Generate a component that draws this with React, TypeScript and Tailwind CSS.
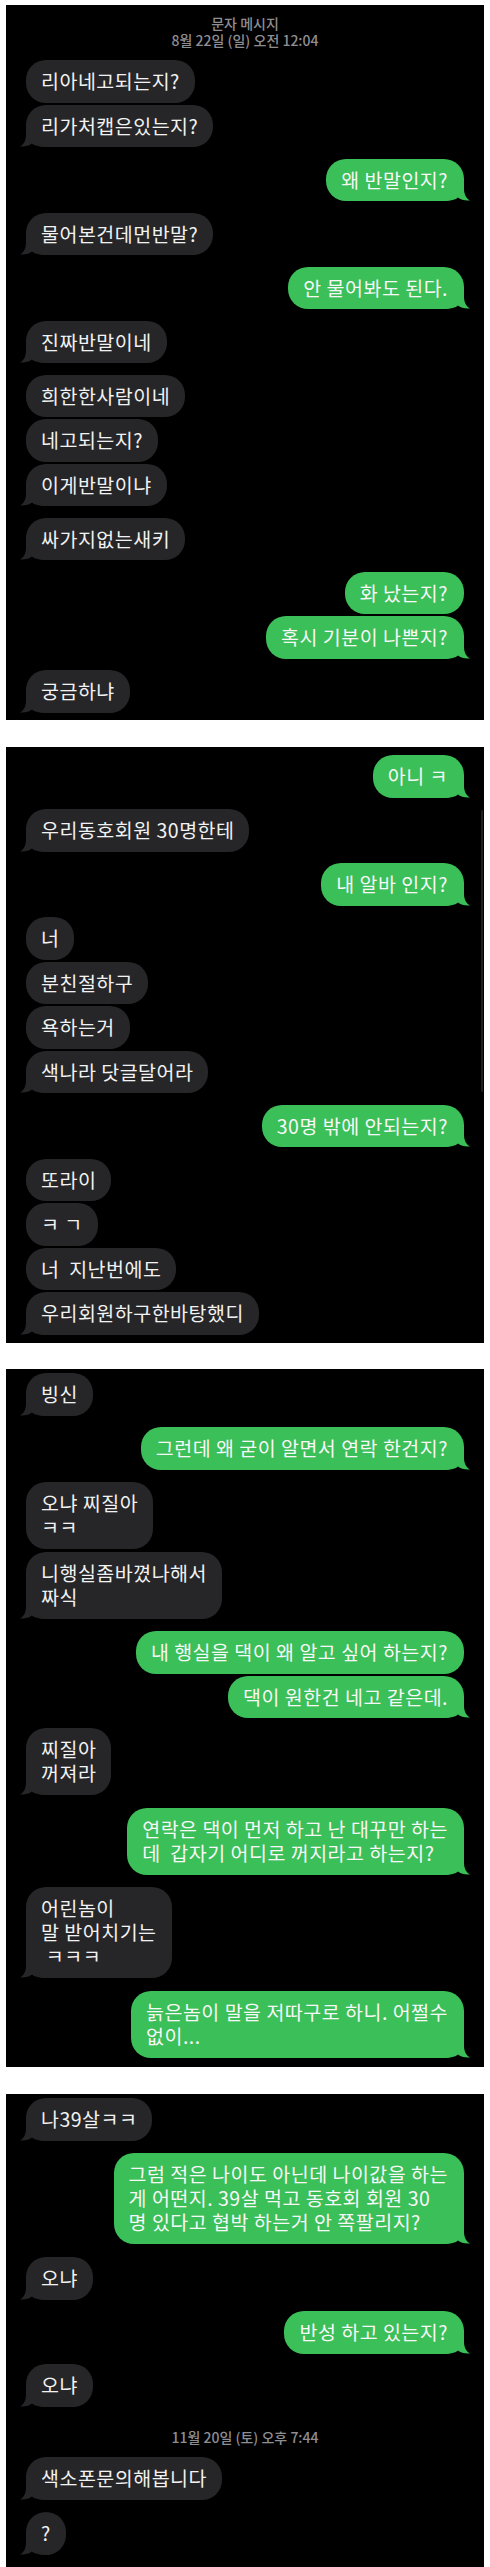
import React from "react";

type Msg = { s: "L" | "R"; t: string; tail?: boolean; mt: string };

const G = "mt-[11.5px]";
const I = "mt-[2px]";

function TailL({ color }: { color: string }) {
  return (
    <svg className="absolute bottom-0 left-[-6px]" width="30" height="20" viewBox="0 0 30 20">
      <path d="M6 0 L6 8 C6 14 3 18 0 19.5 C5 20 9.5 18.5 12 16.5 C14.5 18.5 18 20 30 20 L30 0 Z" fill={color} />
    </svg>
  );
}

function TailR({ color }: { color: string }) {
  return (
    <svg className="absolute bottom-0 right-[-6px]" width="30" height="20" viewBox="0 0 30 20">
      <path d="M24 0 L24 8 C24 14 27 18 30 19.5 C25 20 20.5 18.5 18 16.5 C15.5 18.5 12 20 0 20 L0 0 Z" fill={color} />
    </svg>
  );
}

function Bubble({ m }: { m: Msg }) {
  if (m.s === "L") {
    return (
      <div className={`${m.mt} self-start ml-[20px] relative`}>
        {m.tail && <TailL color="#262628" />}
        <div className="relative rounded-[20px] bg-[#262628] pl-[15px] pr-[15px] py-[9.25px] text-[19.5px] leading-[24px] tracking-[0.5px] text-[#f2f2f2] whitespace-pre">
          {m.t}
        </div>
      </div>
    );
  }
  return (
    <div className={`${m.mt} self-end mr-[20px] relative`}>
      {m.tail && <TailR color="#3bbf58" />}
      <div className="relative rounded-[20px] bg-[#3bbf58] pl-[15px] pr-[16px] py-[9.25px] text-[19.5px] leading-[24px] tracking-[0.5px] text-[#f7f7f7] whitespace-pre">
        {m.t}
      </div>
    </div>
  );
}

const p1: Msg[] = [
  { s: "L", t: "리아네고되는지?", mt: G },
  { s: "L", t: "리가처캡은있는지?", tail: true, mt: I },
  { s: "R", t: "왜 반말인지?", tail: true, mt: G },
  { s: "L", t: "물어본건데먼반말?", tail: true, mt: G },
  { s: "R", t: "안 물어봐도 된다.", tail: true, mt: G },
  { s: "L", t: "진짜반말이네", tail: true, mt: G },
  { s: "L", t: "희한한사람이네", mt: G },
  { s: "L", t: "네고되는지?", mt: I },
  { s: "L", t: "이게반말이냐", tail: true, mt: I },
  { s: "L", t: "싸가지없는새키", tail: true, mt: G },
  { s: "R", t: "화 났는지?", mt: G },
  { s: "R", t: "혹시 기분이 나쁜지?", tail: true, mt: I },
  { s: "L", t: "궁금하냐", tail: true, mt: G },
];

const p2: Msg[] = [
  { s: "R", t: "아니 ㅋ", tail: true, mt: "mt-0" },
  { s: "L", t: "우리동호회원 30명한테", tail: true, mt: G },
  { s: "R", t: "내 알바 인지?", tail: true, mt: G },
  { s: "L", t: "너", mt: G },
  { s: "L", t: "분친절하구", mt: I },
  { s: "L", t: "욕하는거", mt: I },
  { s: "L", t: "색나라 닷글달어라", tail: true, mt: I },
  { s: "R", t: "30명 밖에 안되는지?", tail: true, mt: G },
  { s: "L", t: "또라이", mt: G },
  { s: "L", t: "ㅋ ㄱ", mt: I },
  { s: "L", t: "너  지난번에도", mt: I },
  { s: "L", t: "우리회원하구한바탕했디", tail: true, mt: I },
];

const p3: Msg[] = [
  { s: "L", t: "빙신", tail: true, mt: "mt-0" },
  { s: "R", t: "그런데 왜 굳이 알면서 연락 한건지?", tail: true, mt: G },
  { s: "L", t: "오냐 찌질아\nㅋㅋ", mt: "mt-[12.5px]" },
  { s: "L", t: "니행실좀바꼈나해서\n짜식", tail: true, mt: "mt-[3.5px]" },
  { s: "R", t: "내 행실을 댁이 왜 알고 싶어 하는지?", mt: "mt-[12.5px]" },
  { s: "R", t: "댁이 원한건 네고 같은데.", tail: true, mt: I },
  { s: "L", t: "찌질아\n꺼져라", tail: true, mt: "mt-[10px]" },
  { s: "R", t: "연락은 댁이 먼저 하고 난 대꾸만 하는\n데  갑자기 어디로 꺼지라고 하는지?", tail: true, mt: "mt-[13.5px]" },
  { s: "L", t: "어린놈이\n말 받어치기는\n ㅋㅋㅋ", tail: true, mt: "mt-[12.5px]" },
  { s: "R", t: "늙은놈이 말을 저따구로 하니. 어쩔수\n없이...", tail: true, mt: "mt-[13.5px]" },
];

const p4a: Msg[] = [
  { s: "L", t: "나39살ㅋㅋ", tail: true, mt: "mt-0" },
  { s: "R", t: "그럼 적은 나이도 아닌데 나이값을 하는\n게 어떤지. 39살 먹고 동호회 회원 30\n명 있다고 협박 하는거 안 쪽팔리지?", tail: true, mt: "mt-[12.5px]" },
  { s: "L", t: "오냐", tail: true, mt: "mt-[13.5px]" },
  { s: "R", t: "반성 하고 있는지?", tail: true, mt: G },
  { s: "L", t: "오냐", tail: true, mt: "mt-[10.5px]" },
];

const p4b: Msg[] = [
  { s: "L", t: "색소폰문의해봅니다", tail: true, mt: G },
  { s: "L", t: "?", tail: true, mt: "mt-[12.5px]" },
];

export default function App() {
  return (
    <div className="w-[490px] bg-white pt-[5px] font-['Noto_Sans_CJK_KR','Noto_Sans',sans-serif]">
      {/* Panel 1 */}
      <div className="mx-[6px] h-[715px] overflow-hidden bg-black flex flex-col pt-[9.5px]">
        <div className="text-center text-[14px] leading-[17px] font-medium text-[#8e8e92]">
          <div>문자 메시지</div>
          <div>8월 22일 (일) 오전 12:04</div>
        </div>
        {p1.map((m, i) => (
          <Bubble key={i} m={m} />
        ))}
      </div>

      {/* Panel 2 */}
      <div className="relative mx-[6px] mt-[27px] h-[596px] overflow-hidden bg-black flex flex-col pt-[8px]">
        {p2.map((m, i) => (
          <Bubble key={i} m={m} />
        ))}
        <div className="absolute left-[475px] top-[63px] h-[282px] w-[2px] rounded-full bg-[#1e1e1e]" />
      </div>

      {/* Panel 3 */}
      <div className="mx-[6px] mt-[26px] h-[698px] overflow-hidden bg-black flex flex-col pt-[4px]">
        {p3.map((m, i) => (
          <Bubble key={i} m={m} />
        ))}
      </div>

      {/* Panel 4 */}
      <div className="mx-[6px] mt-[27px] h-[473px] overflow-hidden bg-black flex flex-col pt-[4px]">
        {p4a.map((m, i) => (
          <Bubble key={i} m={m} />
        ))}
        <div className="mt-[22px] text-center text-[14px] leading-[17px] font-medium text-[#8e8e92]">
          11월 20일 (토) 오후 7:44
        </div>
        {p4b.map((m, i) => (
          <Bubble key={i} m={m} />
        ))}
      </div>
    </div>
  );
}
